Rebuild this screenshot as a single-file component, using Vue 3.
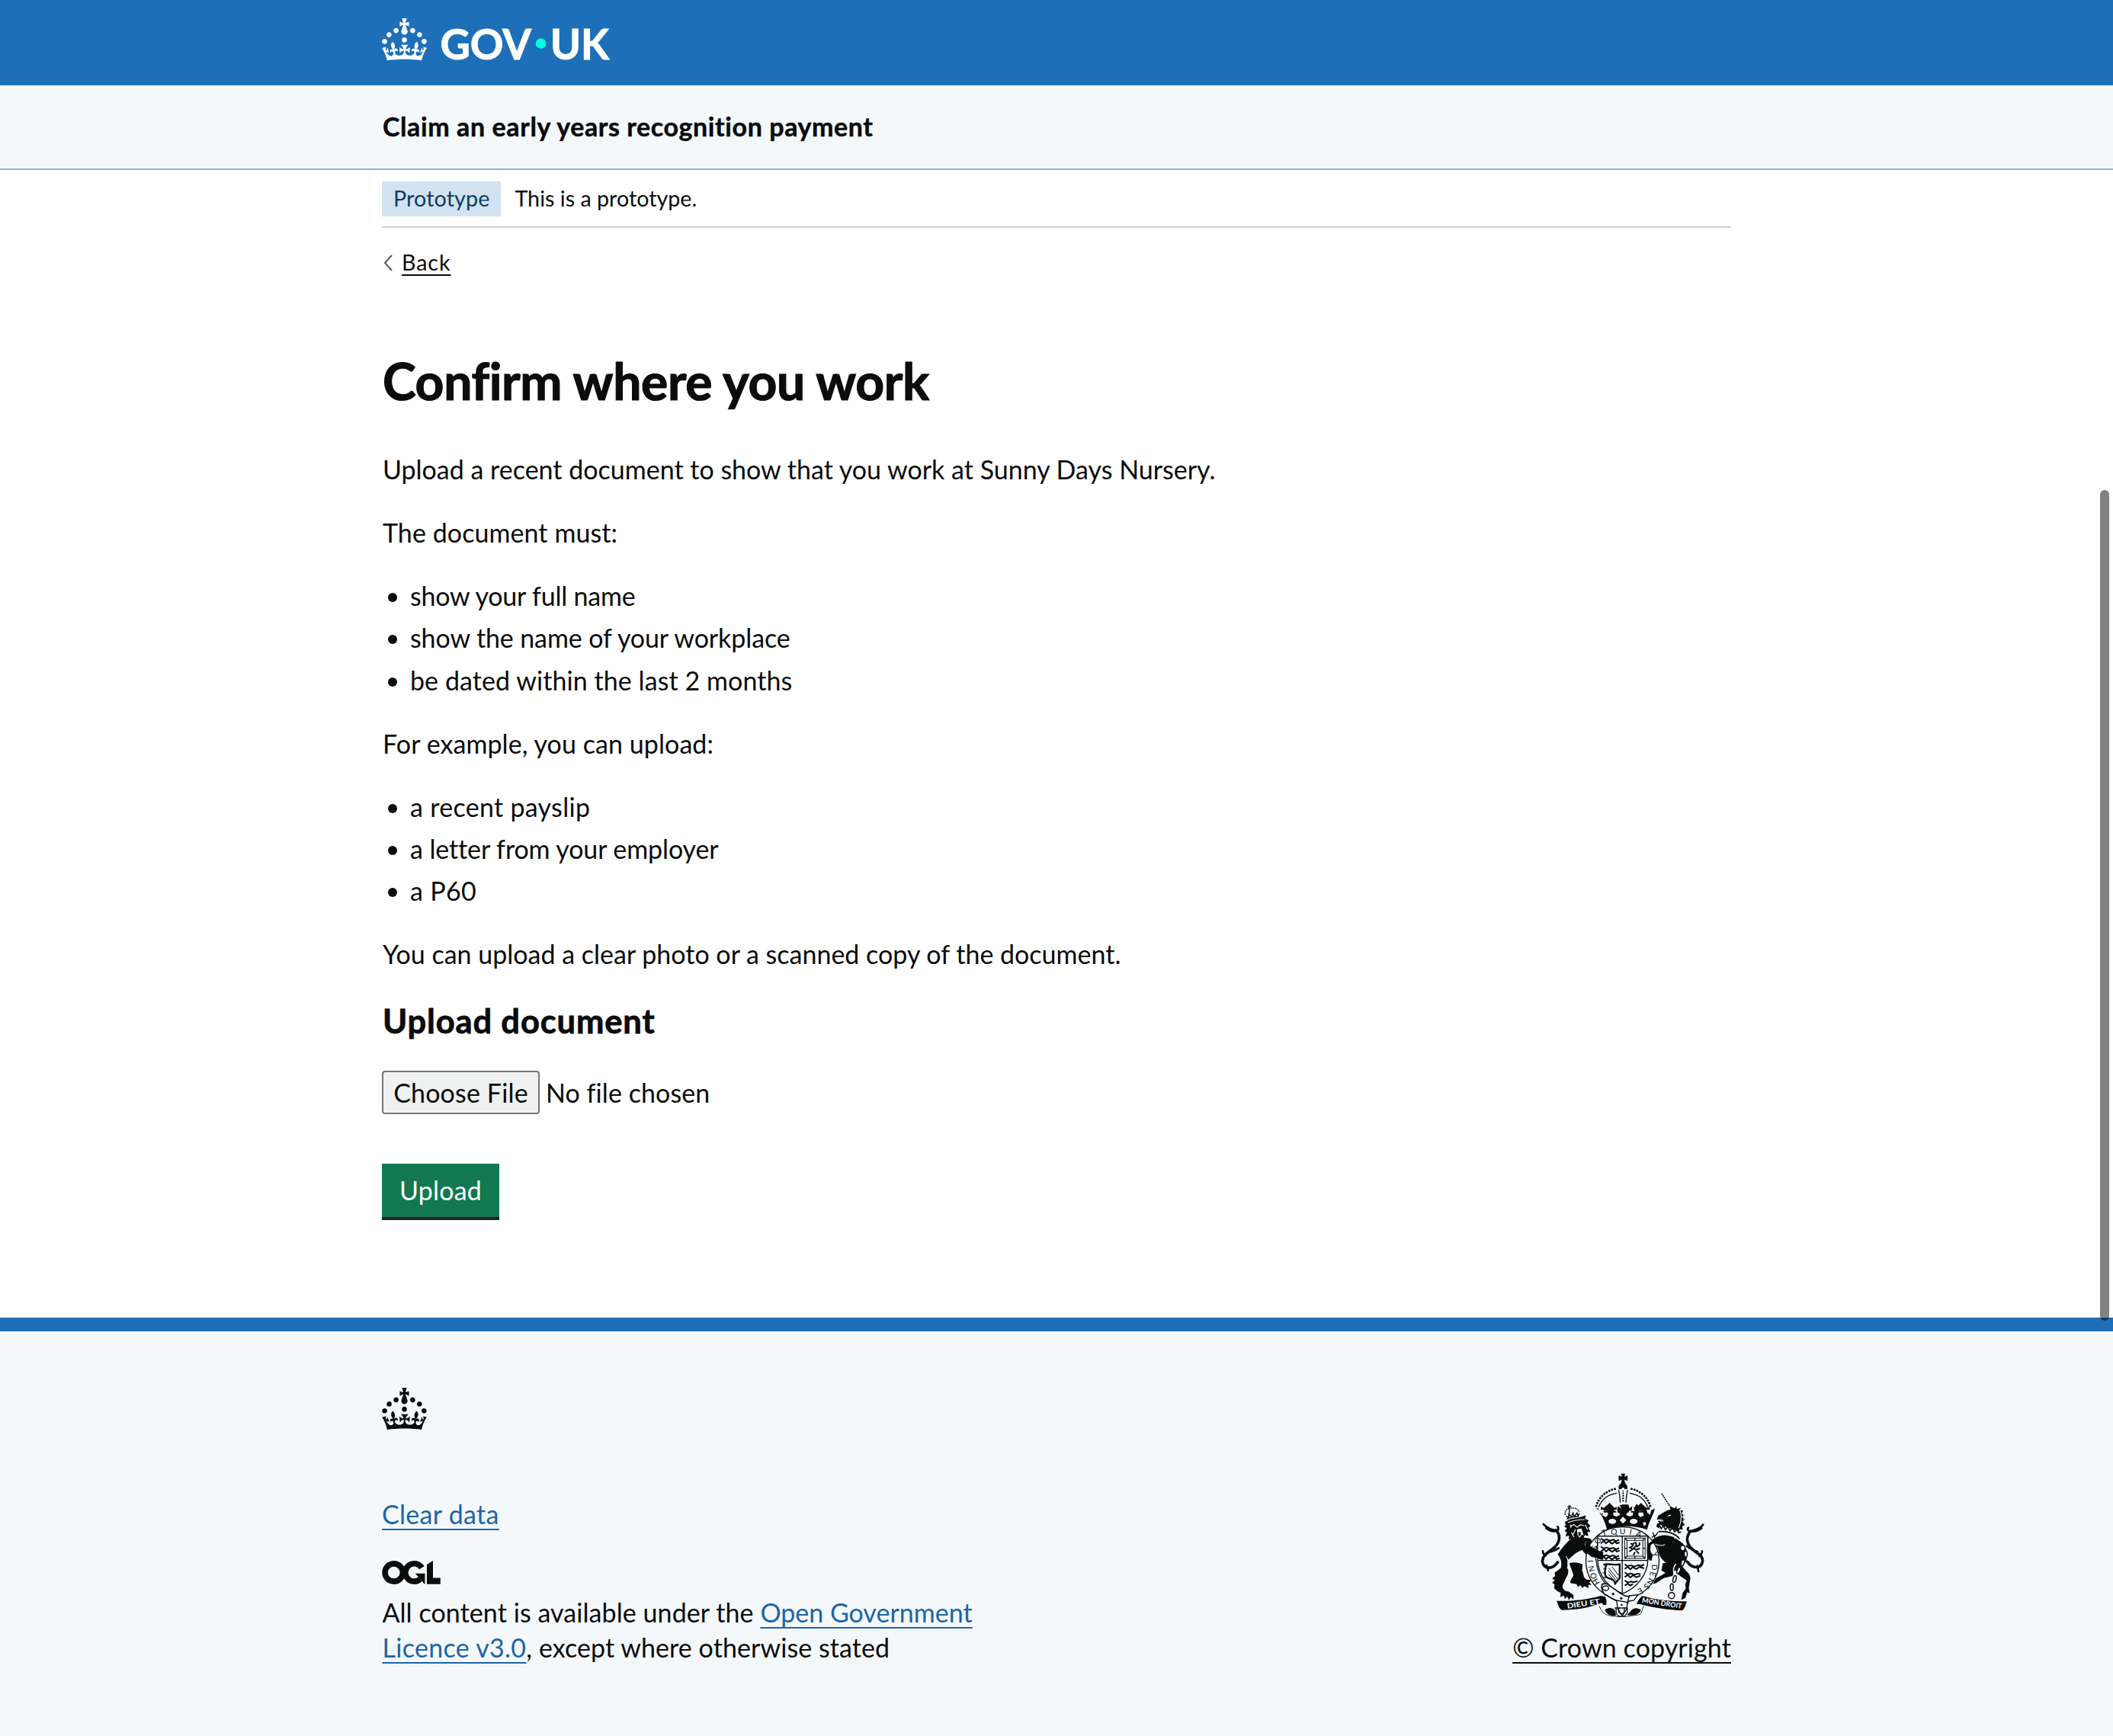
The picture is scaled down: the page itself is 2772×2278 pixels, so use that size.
<script setup>
const crownPath =
  'M22.6 10.4c-1 .4-2-.1-2.4-1-.4-.9.1-2 1-2.4.9-.4 2 .1 2.4 1s-.1 2-1 2.4m-5.9 6.7c-.9.4-2-.1-2.4-1-.4-.9.1-2 1-2.4.9-.4 2 .1 2.4 1s-.1 2-1 2.4m10.8-3.7c-1 .4-2-.1-2.4-1-.4-.9.1-2 1-2.4.9-.4 2 .1 2.4 1s0 2-1 2.4m3.3 4.8c-1 .4-2-.1-2.4-1-.4-.9.1-2 1-2.4.9-.4 2 .1 2.4 1s-.1 2-1 2.4M17 4.7l2.3 1.2V2.5l-2.3.7-.2-.2.9-3h-3.4l.9 3-.2.2c-.1.1-2.3-.7-2.3-.7v3.4L15 4.7c.1.1.1.2.2.2l-1.3 4c-.1.2-.1.4-.1.6 0 1.1.8 2 1.9 2.2h.7c1-.2 1.9-1.1 1.9-2.1 0-.2 0-.4-.1-.6l-1.3-4c-.1-.2 0-.2.1-.3m-7.6 5.7c.9.4 2-.1 2.4-1 .4-.9-.1-2-1-2.4-.9-.4-2 .1-2.4 1s0 2 1 2.4m-5 3c.9.4 2-.1 2.4-1 .4-.9-.1-2-1-2.4-.9-.4-2 .1-2.4 1s.1 2 1 2.4m-3.2 4.8c.9.4 2-.1 2.4-1 .4-.9-.1-2-1-2.4-.9-.4-2 .1-2.4 1s0 2 1 2.4m14.8 11c4.4 0 8.6.3 12.3.8 1.1-4.5 2.4-7 3.7-8.8l-2.5-.9c.2 1.3.3 1.9 0 2.7-.4-.4-.8-1.1-1.1-2.3l-1.2 4c.7-.5 1.3-.8 2-.9-1.1 2.5-2.6 3.1-3.5 3-1.1-.2-1.7-1.2-1.5-2.1.3-1.2 1.5-1.5 2.1-.1 1.1-2.3-.8-3-2-2.3 1.9-1.9 2.1-3.5.6-5.6-2.1 1.6-2.1 3.2-1.2 5.5-1.2-1.4-3.2-.6-2.5 1.6.9-1.4 2.1-.5 1.9.8-.2 1.1-1.7 2.1-3.5 1.9-2.7-.2-2.9-2.1-2.9-3.6.7-.1 1.9.5 2.9 1.9l.4-4.3c-1.1 1.1-2.1 1.4-3.2 1.4.4-1.2 2.1-3 2.1-3h-5.4s1.7 1.9 2.1 3c-1.1 0-2.1-.2-3.2-1.4l.4 4.3c1-1.4 2.2-2 2.9-1.9-.1 1.5-.2 3.4-2.9 3.6-1.9.2-3.4-.8-3.5-1.9-.2-1.3 1-2.2 1.9-.8.7-2.3-1.2-3-2.5-1.6.9-2.2.9-3.9-1.2-5.5-1.5 2-1.3 3.7.6 5.6-1.2-.7-3.1 0-2 2.3.6-1.4 1.8-1.1 2.1.1.2.9-.3 1.9-1.5 2.1-.9.2-2.4-.5-3.5-3 .6 0 1.2.3 2 .9l-1.2-4c-.3 1.1-.7 1.9-1.1 2.3-.3-.8-.2-1.4 0-2.7l-2.9.9C1.3 23 2.6 25.5 3.7 30c3.7-.5 7.9-.8 12.3-.8'

const requirements = [
  { text: 'show your full name', fit: 'tight' },
  { text: 'show the name of your workplace', fit: 'snug' },
  { text: 'be dated within the last 2 months', fit: 'even' },
]
const examples = [
  { text: 'a recent payslip', fit: 'loose' },
  { text: 'a letter from your employer', fit: 'snug' },
  { text: 'a P60', fit: 'loose' },
]
</script>

<template>
  <div class="page">
    <header class="header">
      <div class="container">
        <svg class="brand" viewBox="0 -24 310 112" role="img" aria-label="GOV.UK">
          <path :d="crownPath" fill="#fff" transform="scale(1.843)" />
          <text class="brand-text" x="76.5" y="53.5" textLength="119.5" lengthAdjust="spacingAndGlyphs">GOV</text>
          <circle cx="208.6" cy="33" r="6.8" fill="#00ffe0" />
          <text class="brand-text" x="221" y="53.5" textLength="77" lengthAdjust="spacingAndGlyphs">UK</text>
        </svg>
      </div>
    </header>

    <div class="service">
      <div class="container">
        <span class="service-name">Claim an early years recognition payment</span>
      </div>
    </div>

    <div class="container content">
      <div class="phase">
        <strong class="tag">Prototype</strong>
        <span class="phase-text">This is a prototype.</span>
      </div>
      <a class="back">
        <svg class="caret" viewBox="0 0 12 22"><path d="M11 1 2 11l9 10" fill="none" stroke="#505a5f" stroke-width="2" /></svg>
        <span class="back-text">Back</span>
      </a>

      <main>
        <h1>Confirm where you work</h1>
        <p>Upload a recent document to show that you work at Sunny Days Nursery.</p>
        <p class="even">The document must:</p>
        <ul>
          <li v-for="r in requirements" :key="r.text" :class="r.fit">{{ r.text }}</li>
        </ul>
        <p class="even">For example, you can upload:</p>
        <ul>
          <li v-for="e in examples" :key="e.text" :class="e.fit">{{ e.text }}</li>
        </ul>
        <p>You can upload a clear photo or a scanned copy of the document.</p>
        <h2>Upload document</h2>
        <div class="file">
          <button class="choose" type="button">Choose File</button>
          <span class="even">No file chosen</span>
        </div>
        <button class="submit" type="button">Upload</button>
      </main>
    </div>

    <footer class="footer">
      <div class="container">
        <svg class="footer-crown" viewBox="0 0 32 30"><path :d="crownPath" fill="#0b0c0c" /></svg>
        <div class="meta">
          <div class="meta-left">
            <a class="link loose">Clear data</a>
            <svg class="ogl" viewBox="0 0 483.2 195.7" role="img" aria-label="OGL">
              <g fill="none" stroke="#0b0c0c" stroke-width="48">
                <circle cx="97.8" cy="97.8" r="73.5" />
                <path d="M329 59A73.5 73.5 0 1 0 316 152" />
              </g>
              <path d="M275 105.7h80v88h-3l-52-60zM421.5 142.8V0l-50.7 32.3v161.2h112.4v-50.7z" fill="#0b0c0c" />
            </svg>
            <p class="licence">
              <span class="even">All content is available under the </span><a class="link">Open Government<br /><span class="loose">Licence v3.0</span></a><span class="even">, except where otherwise stated</span>
            </p>
          </div>
          <div class="meta-right">
            <svg class="arms" viewBox="125 97 644 567">
              <!-- royal crown -->
              <g fill="#0b0c0c">
                <path d="M441 99h17l-4 12 13-5v22l-13-5 4 13h-17l4-13-13 5v-22l13 5z" />
                <path d="M449 132c14 6 20 16 16 28h-32c-4-12 2-22 16-28z" />
                <path d="M342 236l14 7 4 18 12-9 2-12-12 2v-13l12 5c6-6 15-12 22-20 8 8 14 14 20 20l8-4v12l-9-1 4 12 14-6-3-20 11 9 5-15h24l5 15 11-9-3 20 14 6 4-12-9 1v-12l8 4c6-6 12-12 20-20 7 8 14 14 22 20l12-5v13l-12-2 2 12 12 9 4-18 14-7c-4 26-22 48-30 84-50-18-110-18-158 0-8-36-24-58-34-84z" />
              </g>
              <g fill="none" stroke="#0b0c0c" stroke-linecap="round">
                <path d="M344 226c10-34 38-60 78-68M556 226c-10-34-38-60-78-68" stroke-width="9" stroke-dasharray="0 11.5" />
                <path d="M354 230c10-28 34-48 70-54M546 230c-10-28-34-48-70-54" stroke-width="4" />
                <path d="M432 164c4 16 6 32 6 48M467 164c-4 16-6 32-6 48" stroke-width="4" />
                <path d="M449.500 166v48" stroke-width="7" stroke-dasharray="0 10" />
              </g>
              <g fill="#f4f8fb">
                <circle cx="449.500" cy="160" r="6" />
                <path d="M449 269l13 13-13 14-13-14z" />
                <ellipse cx="407" cy="287" rx="15" ry="10" />
                <ellipse cx="491" cy="287" rx="15" ry="10" />
                <path d="M362 288l10 5-4 12-9-5zM537 288l-10 5 4 12 9-5z" />
                <path d="M368 264q4-24 20-18 8 14-6 24M412 264q-6-20 8-20 12 4 18 18l-14 6M531 264q-4-24-20-18-8 14 6 24M487 264q6-20-8-20-12 4-18 18l14 6" />
              </g>
              <path d="M397 218c12 14 10 30 4 50h-8c-6-20-8-36 4-50zM503 218c12 14 10 30 4 50h-8c-6-20-8-36 4-50zM436 222h27l-8 14 16-6v24l-16-6 6 20h-24l6-20-16 6v-24l16 6zM374 246h48v6h-48zM480 246h48v6h-48z" fill="#0b0c0c" />

              <!-- lion supporter -->
              <g fill="#0b0c0c">
                <path d="M220 290l22-12 36-6 24-9-2 14 14 6-5 10 12 12-8 7 8 16-12 1 4 16-14-4-6 12-16 14-20 8-12-20-10 4 2-16-14 4 5-18-9-3 9-12-10-6 6-8z" />
                <path d="M262 350c24 2 46 0 60 6 10 20 16 34 34 44l16 6-2 10 12 10-12 1 4 12-16-2-10-6-20-2-14-12-10 2-16-20-26 14-30 26c-6 22 6 38 0 56l-20 42c-4 16 8 24 22 26l20 14v18l-10-10-8 12-6-14-10 10-4-14-14 6 2-16-12-6-14-12 2-16-10-6 10-10-10-8 12-8-2-14 24-18c6-22 0-40-12-54 14-22 42-58 70-74z" />
                <path d="M238 452c18-6 38-2 52 4l-2 24c8 16 2 26 18 36l18 2-8 10 10 8-14 2 2 12-18-8-6 8-10-12-8 8-6-12-24-4c-2-12 8-20 12-30-4-18-12-30-16-48z" />
              </g>
              <g fill="none" stroke="#0b0c0c" stroke-linecap="round">
                <path d="M192 448c-20 30-56 28-60-2-2-24 22-36 42-52 26-20 32-50 12-72" stroke-width="11" />
                <path d="M186 322c-14-2-36-6-50-24M188 326c-16 2-30-2-42-12M188 322c8 0 8-8 4-14M196 392c-14 10-26 14-42 16M134 404c-2 10 4 14 10 18M148 460l6 20" stroke-width="8" />
              </g>
              <g fill="none" stroke="#f4f8fb" stroke-width="3.500">
                <path d="M232 292c20-8 40-12 66-12M240 306l16-6 12 10 14-10 14 4M262 318l-10 22M284 316l8 26M300 300l10 20M246 330l10 20M224 424q16 20 6 50M304 366l-4 16 18 28M244 300v14" />
              </g>
              <path d="M268 318l16-2 6 20-12 16-8-12z" fill="#f4f8fb" />
              <path d="M272 330l10-1 1 12-7 6z" fill="#0b0c0c" />
              <g fill="none" stroke="#0b0c0c">
                <path d="M222 262c-4-16 8-26 16-26 18-4 34 0 38 14" stroke-width="5" stroke-dasharray="4 3" />
                <path d="M228 278c14-8 30-11 48-10M226 266l8 8 2-16 10 12 6-16 6 14 10-14 4 10 6-8" stroke-width="4.500" />
                <path d="M238 222v34M231 229h14" stroke-width="4" />
              </g>

              <!-- unicorn supporter -->
              <g fill="#0b0c0c">
                <path d="M588 264l34-20 14-4-4-14 20 10 8-10v12l16-4-4 10 14 0-6 12 12 6-8 8 10 10-8 8 6 14-10 4 2 14-12-2c-4 16-10 20-22 28-4-22-30-32-56-30l-14-8 4-12 8-2-6-8 22-8-26 2z" />
                <path d="M548 372c20-20 48-34 72-30 30 2 44 16 64 32 20 22 20 48 14 70l-16 16c6 20 34 30 32 52l-6 38 4 20-10-4-8 24-16 6 6-28 12-16-2-18 6-14c-16-14-38-22-40-34l-24-28c-22-6-46-26-50-66-16-6-30-2-42 4l-2 24 8 10 12-10 6 12-6 22-16-8c-8-18-12-34-10-48z" />
                <path d="M606 452c20-4 32-4 46-2l2 24-10 28-34 8-30 20-14 4 12-22 24-14 14-8-16-10z" />
              </g>
              <g fill="none" stroke="#0b0c0c" stroke-linecap="round">
                <path d="M702 446c20 30 56 28 60-2 2-24-18-28-34-42-28-22-34-50-14-76" stroke-width="11" />
                <path d="M714 326c14-6 38-8 50-26M714 326c16 4 30-2 44-12M712 326c-8-2-10-8-6-14M700 384c14 12 26 18 42 22M760 404c2 10-4 14-10 20M742 462l4 22" stroke-width="8" />
              </g>
              <path d="M601 177l32 50" fill="none" stroke="#0b0c0c" stroke-width="5" stroke-dasharray="6 2.500" />
              <g fill="none" stroke="#f4f8fb" stroke-width="3.500">
                <path d="M626 266l12-4M672 240q14 36-4 74M684 252q8 20 4 44M592 282q8 6 16 2M600 330c26 0 48 8 56 26M574 376c14 6 30 8 40 2M650 492q-8-20 8-38M694 264l-14 6M698 284l-16 4" />
              </g>
              <path d="M594 300l84 30-8 24q-36-22-80-22z" fill="#f4f8fb" />
              <g fill="none" stroke="#0b0c0c">
                <path d="M592 302l8 14 8-12 8 16 10-12 8 16 10-12 8 16 10-10 6 14 10-4M588 328c34-4 66 6 84 28" stroke-width="5" />
                <path d="M566 330l10 26M562 350l18-10M586 330l-10 16" stroke-width="4" />
              </g>
              <g fill="#f4f8fb" stroke="#0b0c0c" stroke-width="4.500">
                <ellipse cx="684" cy="392" rx="9" ry="11" />
                <ellipse cx="696" cy="416" rx="6" ry="12" />
                <ellipse cx="684" cy="450" rx="6" ry="13" transform="rotate(18 684 450)" />
                <ellipse cx="668" cy="480" rx="6" ry="13" transform="rotate(22 668 480)" />
                <ellipse cx="652" cy="514" rx="6" ry="14" transform="rotate(14 652 514)" />
                <ellipse cx="641" cy="546" rx="6" ry="13" />
                <circle cx="640" cy="579" r="12" />
              </g>

              <!-- garter and shield -->
              <path d="M447 309c80 0 144 56 144 132 0 80-62 150-144 150s-144-70-144-150c0-76 64-132 144-132z" fill="#f4f8fb" stroke="#0b0c0c" stroke-width="4" />
              <path d="M447 345h100v90c0 66-50 118-100 136-50-18-98-70-98-136v-90z" fill="#f4f8fb" stroke="#0b0c0c" stroke-width="4" />
              <path d="M547 372q14 30 8 70M349 378q-14 30-4 74c6 44 30 80 60 104" fill="none" stroke="#0b0c0c" stroke-width="3.500" />
              <g class="motto">
                <text x="327" y="521" transform="rotate(58 327 521)">H</text>
                <text x="318" y="494" transform="rotate(70 318 494)">O</text>
                <text x="312" y="464" transform="rotate(80 312 464)">N</text>
                <text x="310" y="440" transform="rotate(88 310 440)">I</text>
                <text x="345" y="402" transform="rotate(-72 345 402)">S</text>
                <text x="350" y="380" transform="rotate(-50 350 380)">O</text>
                <text x="370" y="345" transform="rotate(-20 370 345)">T</text>
                <text x="403" y="341" transform="rotate(-8 403 341)">Q</text>
                <text x="436" y="338">U</text>
                <text x="473" y="339" transform="rotate(10 473 339)">I</text>
                <text x="498" y="344" transform="rotate(20 498 344)">A</text>
                <text x="562" y="412" transform="rotate(70 562 412)">Y</text>
                <text x="561" y="456" transform="rotate(90 561 456)">D</text>
                <text x="558" y="484" transform="rotate(102 558 484)">E</text>
                <text x="552" y="508" transform="rotate(116 552 508)">N</text>
                <text x="540" y="530" transform="rotate(132 540 530)">S</text>
                <text x="520" y="548" transform="rotate(150 520 548)">E</text>
              </g>
              <path d="M350 345h196M350 441h196M446 345v222M546 345v96" stroke="#0b0c0c" stroke-width="4" fill="none" />
              <g fill="none" stroke="#0b0c0c" stroke-width="6" stroke-linejoin="round">
                <path d="M362 354l10 8 12-4 14 5 14-4 10 6 12-5M362 374l12-10 8 10 10-9 14 10 12-9 6 8 12-4" />
                <path d="M362 386l10 8 12-4 14 5 14-4 10 6 12-5M362 406l12-10 8 10 10-9 14 10 12-9 6 8 12-4" />
                <path d="M362 416l10 8 12-4 14 5 14-4 10 6 12-5M362 436l12-10 8 10 10-9 14 10 12-9 6 8 12-4" />
                <path d="M456 456l10 8 14-4 14 5 16-6 10 4 12-6M456 474l12-8 10 10 10-9 14 8 12-9 18 6" />
                <path d="M456 488l10 8 14-4 14 5 12-4 12 2M456 506l12-8 10 10 10-9 14 8 16-6" />
                <path d="M456 520l12 8 12-4 12 3 14-6M456 540l12-8 10 8 10-7" />
              </g>
              <g fill="none" stroke="#0b0c0c">
                <rect x="456" y="353" width="80" height="80" stroke-width="3" />
                <rect x="465" y="362" width="62" height="62" stroke-width="3" />
                <path d="M456 353l9 9M536 353l-9 9M456 433l9-9M536 433l-9-9M496 353v9M496 424v9M456 393h9M527 393h9" stroke-width="4" />
                <path d="M478 374l10 4 6-8M498 368l4 14-10 10 10 10M490 382l-14 8 12 6-14 10M502 388l12-8v-10M502 398l14-4M496 408l-6 12M502 404l10 10" stroke-width="6" />
                <path d="M372 458c22-8 40 4 64-2v54l-18 22c-4-22-20-14-34-26M384 458c-8 16-8 40 0 50" stroke-width="7" />
                <path d="M372 474h12M368 490h12M372 508h12M392 470l36 44M392 482l30 38M392 496l20 22M406 466l26 34" stroke-width="3" />
              </g>

              <!-- fore paw and hoof laid over the garter -->
              <path d="M304 362c10 20 30 34 52 42l16 4-2 10 10 8-12 2 4 10-16-2-12-6-18-2-16-14-16-6z" fill="#0b0c0c" />
              <path d="M546 378c10-10 22-18 38-22l-2 14c-12 2-20 6-24 12l-2 24 10 12-4 24-14-6c-6-20-6-42-2-58z" fill="#0b0c0c" />

              <!-- motto scrolls -->
              <path d="M187 600c58 2 118-4 174-20l18 4c6 12 6 20 4 32l-12 0-6-8c-50 20-100 28-156 28-14-6-14-24-22-36z" fill="#0b0c0c" />
              <path d="M700 602c-62 0-122-6-176-22l-12 14-10 18 18 2c56 14 104 22 162 24 12-8 12-22 18-36z" fill="#0b0c0c" />
              <text class="scroll" x="230" y="630" transform="rotate(-8 230 630)" textLength="130" lengthAdjust="spacingAndGlyphs">DIEU ET</text>
              <text class="scroll" x="523" y="606" transform="rotate(9 523 606)" textLength="158" lengthAdjust="spacingAndGlyphs">MON DROIT</text>
              <path d="M356 620c8 22 18 36 50 40l40 4 70-10c8-10 10-22 14-34" fill="none" stroke="#0b0c0c" stroke-width="2.500" />
              <path d="M378 636c10-12 34-10 40 4l4 18c-20 2-36-2-44-22zM520 638c-12-14-32-10-40 2l-16 16c24 4 46 0 56-18z" fill="#0b0c0c" />

              <!-- belt and buckle -->
              <path d="M366 536c8-6 24-4 30 4l42 30c14 10 24 14 36 12l-6 28c-28 2-60-18-84-32-14-4-22-28-18-42z" fill="#f4f8fb" stroke="#0b0c0c" stroke-width="5" stroke-linejoin="round" />
              <path d="M474 580l34-4-16 22-24 4zM424 598l4 32 18 30 18-30 2-24z" fill="#f4f8fb" stroke="#0b0c0c" stroke-width="4" />
              <path d="M422 630v14c4 24 38 24 44 0v-14M432 630v12c4 12 18 12 22 0v-12M416 628h52" fill="none" stroke="#0b0c0c" stroke-width="4" />
              <ellipse cx="381" cy="550" rx="12" ry="9" fill="none" stroke="#0b0c0c" stroke-width="4" />
              <g fill="#0b0c0c"><circle cx="410" cy="573" r="5" /><circle cx="442" cy="590" r="5" /><circle cx="444" cy="616" r="4" /></g>
            </svg>
            <a class="copyright">© Crown copyright</a>
          </div>
        </div>
      </div>
    </footer>

    <div class="scrollbar"></div>
  </div>
</template>

<style>
body {
  background: #fff;
}
</style>

<style scoped>
.page {
  position: relative;
  width: 2772px;
  height: 2278px;
  overflow: hidden;
  display: flex;
  flex-direction: column;
  font-family: Lato, "Noto Sans", sans-serif;
  font-size: 34px;
  line-height: 46px;
  color: #0b0c0c;
}
.container {
  width: 1770px;
  margin: 0 auto;
}
.header {
  height: 112px;
  background: #1d70b8;
}
.brand {
  display: block;
  width: 310px;
  height: 112px;
  overflow: visible;
}
.brand-text {
  font: 700 56px Lato, sans-serif;
  fill: #fff;
  stroke: #fff;
  stroke-width: 1px;
}
.service {
  height: 109px;
  background: #f4f8fb;
  border-bottom: 2px solid #8eb8dc;
}
.service .container {
  padding-top: 31px;
}
.service-name {
  display: block;
  padding-left: 1px;
  font-weight: 700;
  letter-spacing: 0.59px;
  -webkit-text-stroke: 0.5px #0b0c0c;
}
.content {
  height: 1506px;
}
.phase {
  display: flex;
  align-items: center;
  gap: 18px;
  padding: 15px 0 13px;
  border-bottom: 2px solid #cecfd0;
  font-size: 28.7px;
}
.tag {
  height: 46px;
  line-height: 44px;
  padding: 0 15px;
  font-weight: 400;
  letter-spacing: 0.12px;
  color: #0c3d66;
  background: #d2e2f1;
}
.phase-text {
  line-height: 44px;
  height: 46px;
}
.back {
  display: flex;
  align-items: flex-start;
  gap: 12px;
  margin-top: 27px;
  padding-left: 2px;
  font-size: 28.7px;
  line-height: 36px;
}
.caret {
  width: 12px;
  height: 22px;
  margin-top: 8px;
}
.back-text {
  letter-spacing: 0.9px;
  text-decoration: underline 2px;
  text-underline-offset: 5px;
}
h1 {
  margin: 101px 0 56px;
  padding-left: 1px;
  font-size: 66px;
  line-height: 74px;
  letter-spacing: -0.37px;
  -webkit-text-stroke: 1.2px #0b0c0c;
}
p {
  margin: 0 0 37px;
  padding-left: 1px;
}
ul {
  list-style: none;
  margin: 0 0 37px;
  padding: 0 0 0 8px;
  display: flex;
  flex-direction: column;
  gap: 9.3px;
}
li {
  display: flex;
  align-items: center;
  gap: 17px;
}
li::before {
  content: "";
  width: 12px;
  height: 12px;
  margin-top: 4px;
  border-radius: 50%;
  background: #0b0c0c;
}
.tight {
  letter-spacing: -0.22px;
}
.snug {
  letter-spacing: -0.11px;
}
.even {
  letter-spacing: 0.07px;
}
.loose {
  letter-spacing: 0.3px;
}
h2 {
  margin: 35px 0 38px;
  padding-left: 1px;
  font-size: 43.500px;
  line-height: 55px;
  letter-spacing: 0.85px;
  -webkit-text-stroke: 0.8px #0b0c0c;
}
.file {
  display: flex;
  align-items: center;
  gap: 8px;
}
button {
  font: inherit;
  margin: 0;
}
.choose {
  width: 207px;
  height: 57px;
  padding: 0;
  letter-spacing: 0.15px;
  color: #0b0c0c;
  background: #eff0f0;
  border: 2px solid #767676;
  border-radius: 4px;
}
.submit {
  display: block;
  width: 154px;
  height: 74px;
  margin-top: 65px;
  padding: 0;
  letter-spacing: 0.2px;
  color: #fff;
  background: #11784f;
  border: 0;
  border-bottom: 4px solid #1f2825;
}
.footer {
  flex: 1;
  border-top: 18px solid #1d70b8;
  background: linear-gradient(#fafcfd, #fafcfd) 0 212px / 100% 1px no-repeat #f4f8fb;
}
.footer-crown {
  display: block;
  width: 59px;
  height: 55px;
  padding-top: 74px;
}
.meta {
  display: flex;
  justify-content: space-between;
  align-items: flex-end;
  margin-top: 88px;
  height: 221px;
}
.meta-left {
  display: flex;
  flex-direction: column;
  align-items: flex-start;
}
.link,
.copyright {
  text-decoration: underline 2px;
  text-underline-offset: 6px;
  text-decoration-skip-ink: none;
}
.link {
  color: #1d65a6;
}
.ogl {
  width: 77px;
  height: 31px;
  margin: 38px 0 14px;
}
.licence {
  margin: 0;
  padding-left: 0.5px;
}
.meta-right {
  display: flex;
  flex-direction: column;
  align-items: center;
}
.arms {
  width: 215px;
  height: 189px;
  margin: 0 0 17px 2px;
}
.copyright {
  letter-spacing: 0.1px;
}
.motto {
  font: 400 31px Lato, sans-serif;
  fill: #0b0c0c;
}
.scroll {
  font: 700 28px Lato, sans-serif;
  fill: #fff;
}
.scrollbar {
  position: absolute;
  left: 2755px;
  top: 643px;
  width: 12px;
  height: 1090px;
  border-radius: 6px;
  background: rgba(5, 5, 5, 0.5);
}
</style>
